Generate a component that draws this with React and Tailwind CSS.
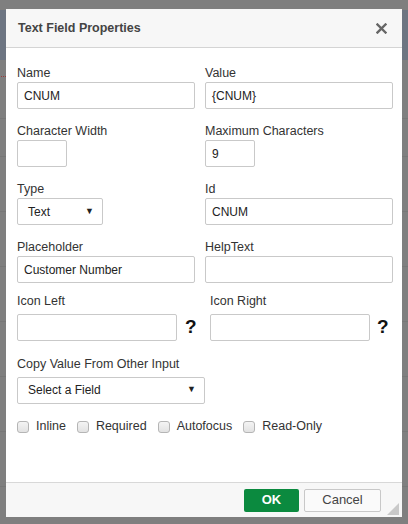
import React from 'react';

const font = { fontFamily: '"Liberation Sans", Arial, sans-serif' };

function Label({ children, className = '' }) {
  return <div className={`text-[12.5px] leading-[16px] text-[#333] ${className}`}>{children}</div>;
}

function TextBox({ value = '', className = '' }) {
  return (
    <div className={`h-[27px] border border-[#c9c9c9] rounded-[2px] bg-white px-[6px] flex items-center text-[12px] text-[#222] ${className}`}>
      {value}
    </div>
  );
}

function SelectBox({ value, className = '' }) {
  return (
    <div className={`h-[27px] border border-[#c9c9c9] rounded-[2px] bg-white pl-[10px] pr-[8px] flex items-center justify-between text-[12px] text-[#222] ${className}`}>
      <span>{value}</span>
      <span className="text-[9px] text-[#222]">▼</span>
    </div>
  );
}

function Check({ label }) {
  return (
    <div className="flex items-center gap-[7px]">
      <div className="w-[12px] h-[12px] rounded-[3px] border border-[#b5b5b5] bg-gradient-to-b from-[#f4f4f4] to-[#e2e2e2]" />
      <span className="text-[12.5px] text-[#333]">{label}</span>
    </div>
  );
}

export default function App() {
  return (
    <div className="relative w-[408px] h-[524px] bg-[#7f7f7f] overflow-hidden" style={font}>
      {/* page behind the overlay */}
      <div className="h-[10px]" />
      <div className="h-[50px] bg-[#6d7582]" />
      <div className="h-[16px]" />
      <div className="ml-[1px] w-[5px] border-t border-dotted border-[#9a3b3b]" />
      <div className="flex flex-col">
        {[42, 38, 55, 55, 55, 55, 55, 55].map((h, i) => (
          <div key={i} style={{ height: h }} className="border-b border-[#777]" />
        ))}
      </div>

      {/* Dialog */}
      <div className="absolute left-[6px] top-[9px] w-[396px] h-[508px] bg-white flex flex-col">
        <div className="h-[39px] bg-[#f7f7f7] border-b border-[#d4d4d4] flex items-center justify-between pl-[12px] pr-[15px]">
          <span className="text-[12.5px] font-bold text-[#444]">Text Field Properties</span>
          <svg width="11" height="11" viewBox="0 0 11 11">
            <path d="M1.5 1.5 L9.5 9.5 M9.5 1.5 L1.5 9.5" stroke="#666" strokeWidth="2.4" strokeLinecap="square" />
          </svg>
        </div>

        <div className="flex-1 pl-[11px] pr-[9px] pt-[17px]">
          <div className="grid grid-cols-[178px_188px] gap-x-[10px]">
            <div>
              <Label className="mb-[1px]">Name</Label>
              <TextBox value="CNUM" />
            </div>
            <div>
              <Label className="mb-[1px]">Value</Label>
              <TextBox value="{CNUM}" />
            </div>

            <div className="mt-[14px]">
              <Label className="mb-[1px]">Character Width</Label>
              <TextBox className="w-[50px]" />
            </div>
            <div className="mt-[14px]">
              <Label className="mb-[1px]">Maximum Characters</Label>
              <TextBox value="9" className="w-[50px]" />
            </div>

            <div className="mt-[14px]">
              <Label className="mb-[1px]">Type</Label>
              <SelectBox value="Text" className="w-[86px]" />
            </div>
            <div className="mt-[14px]">
              <Label className="mb-[1px]">Id</Label>
              <TextBox value="CNUM" />
            </div>

            <div className="mt-[14px]">
              <Label className="mb-[1px]">Placeholder</Label>
              <TextBox value="Customer Number" />
            </div>
            <div className="mt-[14px]">
              <Label className="mb-[1px]">HelpText</Label>
              <TextBox />
            </div>
          </div>

          <div className="flex mt-[10px]">
            <div className="w-[193px]">
              <Label className="mb-[4px]">Icon Left</Label>
              <div className="flex items-center">
                <TextBox className="w-[160px]" />
                <span className="ml-[8px] text-[19px] font-bold text-[#111]">?</span>
              </div>
            </div>
            <div>
              <Label className="mb-[4px]">Icon Right</Label>
              <div className="flex items-center">
                <TextBox className="w-[160px]" />
                <span className="ml-[7px] text-[19px] font-bold text-[#111]">?</span>
              </div>
            </div>
          </div>

          <div className="mt-[14px]">
            <Label className="mb-[5px]">Copy Value From Other Input</Label>
            <SelectBox value="Select a Field" className="w-[188px]" />
          </div>

          <div className="mt-[15px] h-[16px] flex items-center gap-[11px]">
            <Check label="Inline" />
            <Check label="Required" />
            <Check label="Autofocus" />
            <Check label="Read-Only" />
          </div>
        </div>

        <div className="relative h-[35px] bg-[#f7f7f7] border-t border-[#d8d8d8] flex items-center justify-end gap-[5px] pr-[21px]">
          <button className="w-[55px] h-[23px] rounded-[2px] bg-[#0b8a3f] text-white text-[13px] font-bold">OK</button>
          <button className="w-[77px] h-[23px] rounded-[2px] bg-[#fafafa] border border-[#c8c8c8] text-[#444] text-[13px]">Cancel</button>
          <svg className="absolute right-[3px] bottom-[2px]" width="12" height="12" viewBox="0 0 12 12">
            <path d="M12 0 L12 12 L0 12 Z" fill="#c9c9c9" />
          </svg>
        </div>
      </div>
    </div>
  );
}
